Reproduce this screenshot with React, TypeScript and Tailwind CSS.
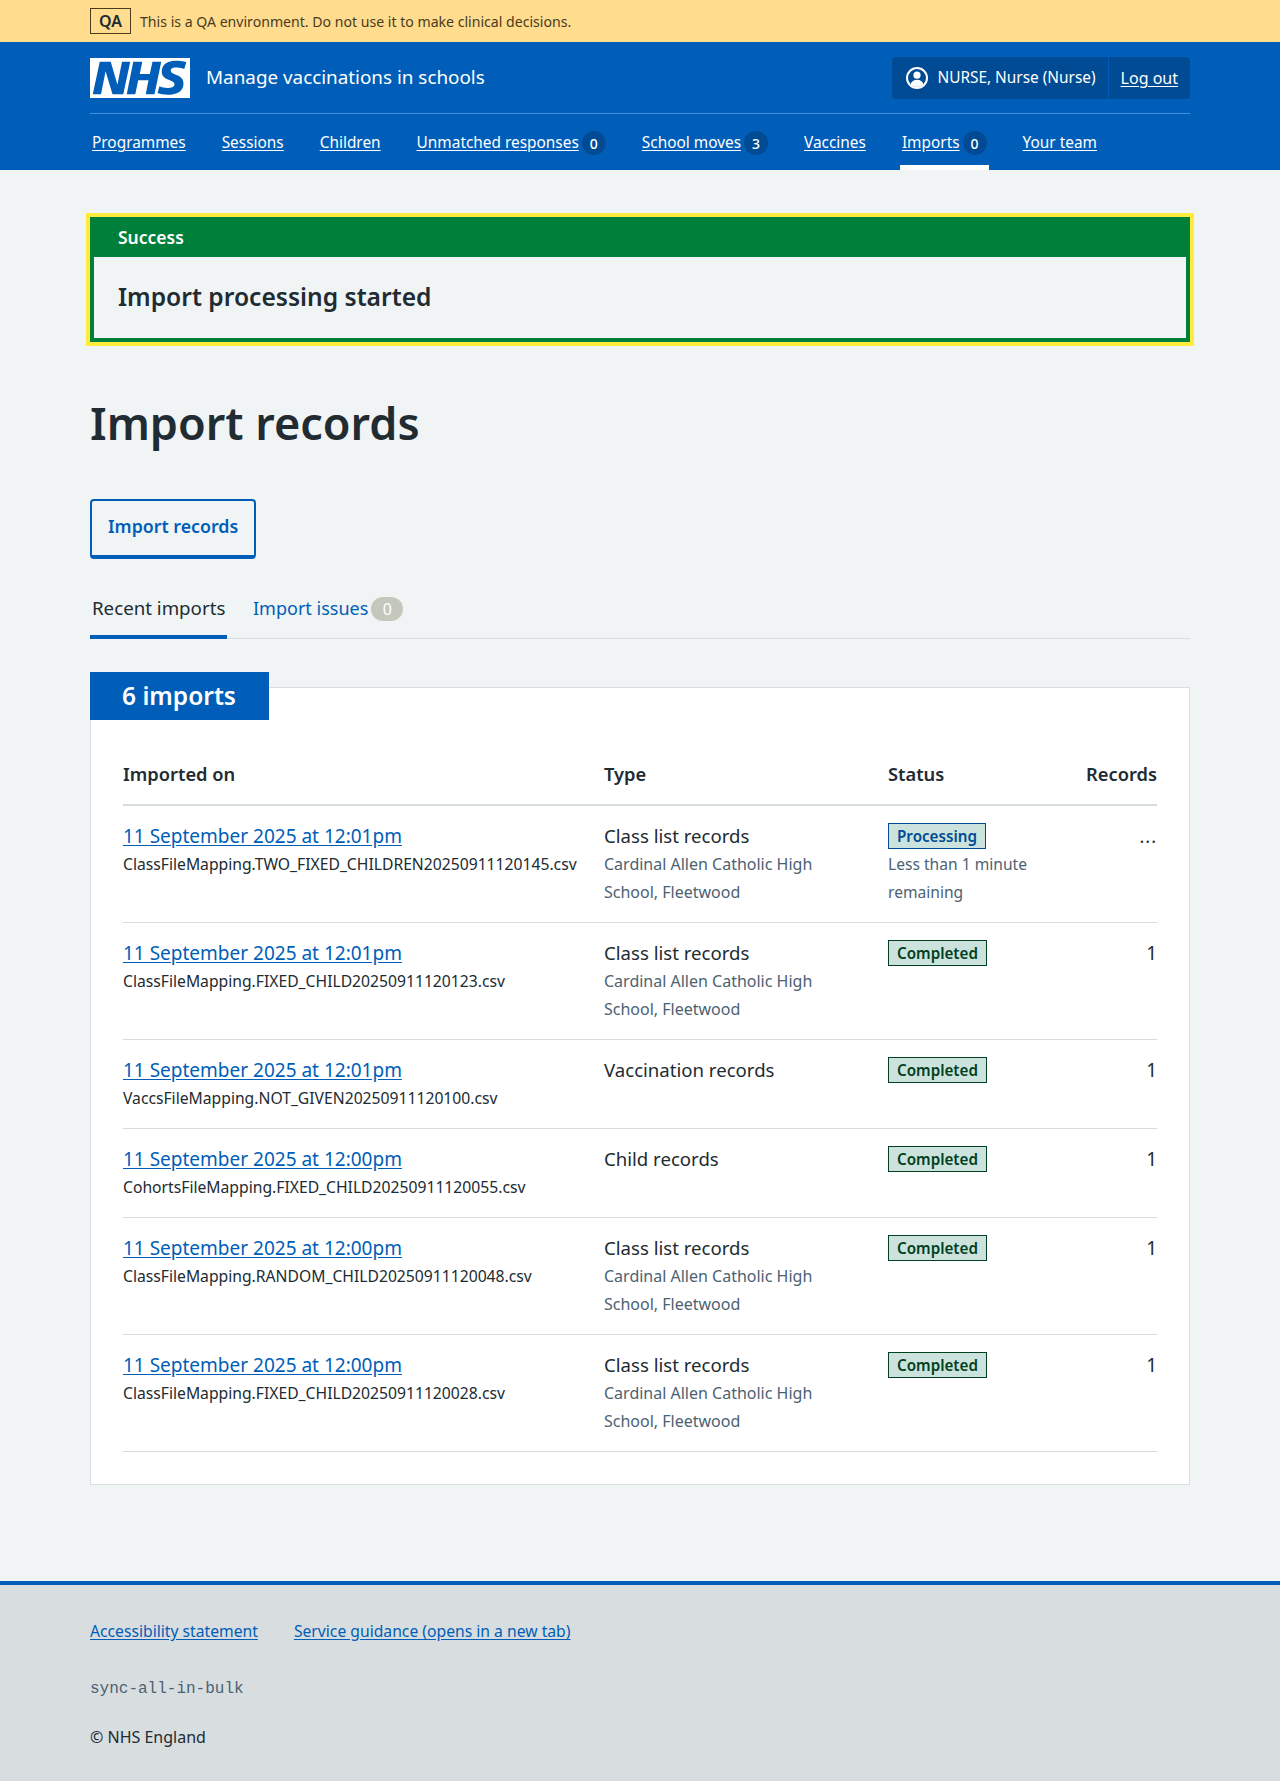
const navItems = [
  { label: "Programmes" },
  { label: "Sessions" },
  { label: "Children" },
  { label: "Unmatched responses", count: 0 },
  { label: "School moves", count: 3 },
  { label: "Vaccines" },
  { label: "Imports", count: 0, active: true },
  { label: "Your team" },
];

const imports = [
  { date: "11 September 2025 at 12:01pm", file: "ClassFileMapping.TWO_FIXED_CHILDREN20250911120145.csv", type: "Class list records", school: true, status: "Processing", records: "..." },
  { date: "11 September 2025 at 12:01pm", file: "ClassFileMapping.FIXED_CHILD20250911120123.csv", type: "Class list records", school: true, status: "Completed", records: "1" },
  { date: "11 September 2025 at 12:01pm", file: "VaccsFileMapping.NOT_GIVEN20250911120100.csv", type: "Vaccination records", school: false, status: "Completed", records: "1" },
  { date: "11 September 2025 at 12:00pm", file: "CohortsFileMapping.FIXED_CHILD20250911120055.csv", type: "Child records", school: false, status: "Completed", records: "1" },
  { date: "11 September 2025 at 12:00pm", file: "ClassFileMapping.RANDOM_CHILD20250911120048.csv", type: "Class list records", school: true, status: "Completed", records: "1" },
  { date: "11 September 2025 at 12:00pm", file: "ClassFileMapping.FIXED_CHILD20250911120028.csv", type: "Class list records", school: true, status: "Completed", records: "1" },
];

const NhsLogo = () => (
  <svg viewBox="0 0 40 16" className="w-[100px] h-[40px] shrink-0">
    <path fill="#fff" d="M0 0h40v16H0z" />
    <path
      fill="#005eb8"
      d="M3.9 1.5h4.4l2.6 9h.1l1.8-9h3.3l-2.8 13H9l-2.7-9h-.1l-1.8 9H1.1M17.3 1.5h3.6l-1 4.9h4L25 1.5h3.5l-2.7 13h-3.5l1.1-5.6h-4.1l-1.2 5.6h-3.4M37.7 4.4c-.7-.3-1.6-.6-2.9-.6-1.4 0-2.5.2-2.5 1.3 0 1.8 5.1 1.2 5.1 5.1 0 3.6-3.3 4.5-6.4 4.5-1.3 0-2.9-.3-4-.7l.8-2.7c.7.4 2.1.7 3.2.7s2.8-.2 2.8-1.5c0-2.1-5.1-1.3-5.1-5 0-3.4 2.9-4.4 5.8-4.4 1.6 0 3.1.2 4 .6"
    />
  </svg>
);

const UserIcon = () => (
  <svg viewBox="0 0 24 24" className="w-6 h-6 shrink-0" fill="#fff">
    <path d="M12 1a11 11 0 1 0 0 22 11 11 0 0 0 0-22Zm0 2a9 9 0 1 1 0 18 9 9 0 0 1 0-18Z" />
    <circle cx="12" cy="9.2" r="3.6" />
    <path d="M5.6 18.4c.8-3 3.2-4.6 6.4-4.6s5.6 1.6 6.4 4.6A9 9 0 0 1 12 21a9 9 0 0 1-6.4-2.6Z" />
  </svg>
);

const Header = () => (
  <header className="bg-[#005eb8] h-[128px]">
    <div className="mx-[90px]">
      <div className="flex items-center justify-between h-[72px] border-b border-[#418fde]">
        <div className="flex items-center gap-4">
          <NhsLogo />
          <span className="text-[18.85px] text-white leading-[28px] pb-[2px]">Manage vaccinations in schools</span>
        </div>
        <div className="flex items-center h-[42px] bg-[#004b93] rounded text-white text-[16px]">
          <div className="flex items-center gap-2 pl-[13px] pr-3 h-full border-r border-[#005eb8]">
            <UserIcon />
            <span className="text-[15.4px]">NURSE, Nurse (Nurse)</span>
          </div>
          <a href="#" className="px-3 underline underline-offset-2">Log out</a>
        </div>
      </div>
      <nav className="flex h-[56px]">
        {navItems.map((item) => (
          <div
            key={item.label}
            className={
              "flex items-center gap-[3px] px-[2px] mr-[32px] h-full text-[15.4px] text-white border-b-[5px] pt-[7px] " +
              (item.active ? "border-white" : "border-transparent")
            }
          >
            <a href="#" className="underline underline-offset-2">{item.label}</a>
            {item.count !== undefined && (
              <span className="flex items-center justify-center w-6 h-6 rounded-full bg-[#004b93] text-[14px] font-medium">
                {item.count}
              </span>
            )}
          </div>
        ))}
      </nav>
    </div>
  </header>
);

const StatusTag = ({ status }: { status: string }) => {
  const processing = status === "Processing";
  return (
    <span
      className={
        "inline-block border px-2 text-[15.2px] leading-[24px] font-semibold bg-[#cce3dd] " +
        (processing ? "border-[#004b93] text-[#004b93]" : "border-[#00401e] text-[#00401e]")
      }
    >
      {status}
    </span>
  );
};

export default function App() {
  return (
    <div className="font-['Noto_Sans',sans-serif] bg-[#f0f4f5] text-[#212b32] min-h-[1781px]">
      <div className="bg-[#ffdc8e] h-[42px] flex items-center px-[90px] text-[14.1px] text-[#4a3b1d] gap-[9px]">
        <span className="border border-[#4a3b1d] px-2 h-[26px] flex items-center font-semibold text-[16px] text-[#212b32]">QA</span>
        <span className="pt-[1px]">This is a QA environment. Do not use it to make clinical decisions.</span>
      </div>
      <Header />

      <main className="mx-[90px] pt-[47px] pb-[96px]">
        <div className="outline-4 outline-[#ffeb3b] border-4 border-[#007f3b]">
          <div className="bg-[#007f3b] text-white font-semibold text-[17.5px] h-[36px] pl-6 pb-[4px] flex items-center">Success</div>
          <div className="h-[81px] pl-6 flex items-center text-[24.6px] font-semibold">Import processing started</div>
        </div>

        <h1 className="text-[45px] leading-[56px] font-semibold mt-[53px] text-[#212b32]">Import records</h1>

        <button className="mt-[48px] block border-2 border-b-4 border-[#005eb8] rounded text-[#005eb8] text-[17.8px] font-semibold h-[60px] px-4 pb-[3px]">
          Import records
        </button>

        <div className="flex mt-[29px] h-[51px] border-b border-[#d8dde0]">
          <div className="border-b-4 border-[#005eb8] h-[51px] w-[137px] px-[2px] pt-[6px] text-[18.7px] leading-[28px] whitespace-nowrap">Recent imports</div>
          <a href="#" className="ml-[26px] pt-[6px] text-[18px] leading-[28px] text-[#005eb8] flex items-start gap-[3px]">
            Import issues
            <span className="flex items-center justify-center w-8 h-6 mt-[3px] rounded-full bg-[#c4c8bc] text-white text-[16px]">0</span>
          </a>
        </div>

        <section className="relative mt-[48px] bg-white border border-[#d8dde0] h-[798px] px-8 pt-[72px]">
          <h2 className="absolute -left-[1px] -top-[16px] h-12 w-[179px] bg-[#005eb8] text-white text-[24.5px] font-semibold flex items-center pl-8">
            6 imports
          </h2>
          <table className="w-full table-fixed border-collapse">
            <thead>
              <tr className="border-b-2 border-[#d8dde0] text-left text-[18.3px] leading-[28px]">
                <th className="w-[481px] pb-[16px] font-semibold">Imported on</th>
                <th className="w-[284px] pb-[16px] font-semibold">Type</th>
                <th className="w-[150px] pb-[16px] font-semibold">Status</th>
                <th className="pb-[16px] font-semibold text-right">Records</th>
              </tr>
            </thead>
            <tbody>
              {imports.map((row, i) => (
                <tr key={i} className="border-b border-[#d8dde0] align-top">
                  <td className="py-4 pr-4">
                    <a href="#" className="block text-[19px] leading-[28px] text-[#005eb8] underline underline-offset-2">{row.date}</a>
                    <div className="text-[15.7px] leading-[28px] whitespace-nowrap">{row.file}</div>
                  </td>
                  <td className="py-4 pr-8">
                    <div className="text-[18.6px] leading-[27px] pb-[1px]">{row.type}</div>
                    {row.school && (
                      <div className="text-[16px] leading-[28px] text-[#4c6272]">Cardinal Allen Catholic High School, Fleetwood</div>
                    )}
                  </td>
                  <td className="py-4">
                    <div className="h-[28px] flex items-center"><StatusTag status={row.status} /></div>
                    {row.status === "Processing" && (
                      <div className="text-[15.6px] leading-[28px] text-[#4c6272]">Less than 1 minute remaining</div>
                    )}
                  </td>
                  <td className={"py-4 text-right leading-[28px] " + (row.records === "..." ? "text-[18px] tracking-[1px]" : "text-[19px]")}>{row.records}</td>
                </tr>
              ))}
            </tbody>
          </table>
        </section>
      </main>

      <footer className="border-t-4 border-[#005eb8] bg-[#d8dde0] h-[200px] px-[90px] pt-[34px] text-[15.7px]">
        <div className="flex gap-9 leading-[24px] text-[#005eb8]">
          <a href="#" className="underline underline-offset-2">Accessibility statement</a>
          <a href="#" className="underline underline-offset-2">Service guidance (opens in a new tab)</a>
        </div>
        <div className="mt-[34px] font-['Liberation_Mono',monospace] text-[16px] leading-[24px] text-[#4c6272]">sync-all-in-bulk</div>
        <div className="mt-[24px] text-[16px] leading-[24px]">© NHS England</div>
      </footer>
    </div>
  );
}
